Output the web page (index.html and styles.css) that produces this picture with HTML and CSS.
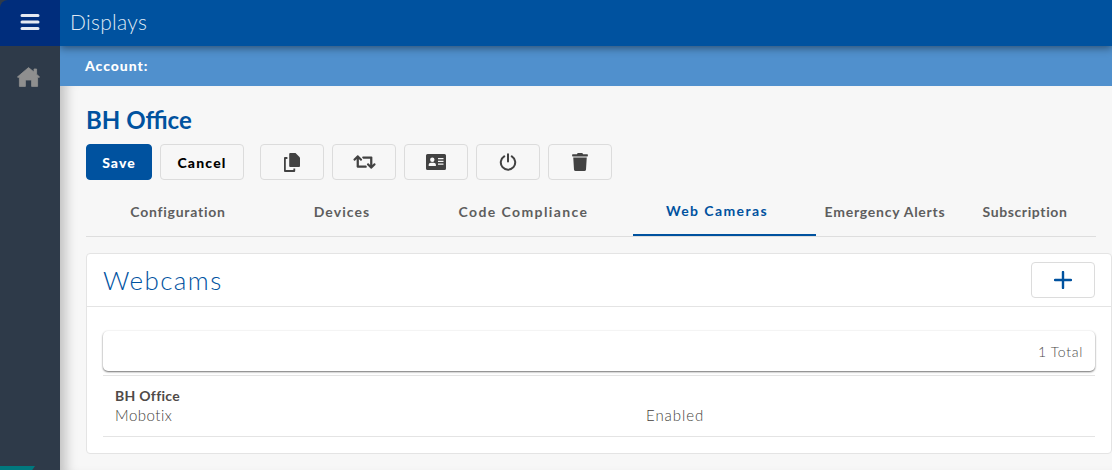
FILE: index.html
```html
<!DOCTYPE html>
<html lang="en">
<head>
<meta charset="utf-8">
<title>Displays</title>
<link rel="stylesheet" href="styles.css">
</head>
<body>
<div class="app">
  <aside class="sidebar">
    <button class="burger" aria-label="Menu">
      <svg width="20" height="18" viewBox="0 0 20 18"><path d="M2 2.500h16M2 9h16M2 15.500h16" stroke="#e4e9f2" stroke-width="3" stroke-linecap="round" fill="none"/></svg>
    </button>
    <div class="side-home">
      <svg width="23" height="20" viewBox="0 0 23 20"><path fill="#8f8f8f" stroke="#8f8f8f" stroke-width=".8" stroke-linejoin="round" d="M11.500.6L17 5V2h2.600v5.200L22.600 10l-2 .6V19.400h-6V13h-6.200v6.400h-6V10.600l-2-.6z"/></svg>
    </div>
    <div class="side-foot"></div>
  </aside>
  <div class="page">
    <header class="topbar"><h1>Displays</h1></header>
    <div class="account">Account:</div>
    <main class="main">
      <h2 class="title">BH Office</h2>
      <div class="actions">
        <button class="btn btn-save">Save</button>
        <button class="btn btn-cancel">Cancel</button>
        <div class="icon-group">
          <button class="btn btn-icon" aria-label="Copy">
            <svg width="16" height="19" viewBox="0 0 16 19"><path fill="#424242" d="M6.200 0h5.300L16 4.500V13a1 1 0 0 1-1 1H6.200a1 1 0 0 1-1-1V1a1 1 0 0 1 1-1z"/><path fill="none" stroke="#424242" stroke-width="1.800" stroke-linejoin="round" d="M3.400 5H.9v13h9.400v-2.600"/></svg>
          </button>
          <button class="btn btn-icon" aria-label="Exchange">
            <svg width="23" height="18" viewBox="0 0 640 512"><path fill="#424242" d="M629.657 343.598L528.971 444.284c-9.373 9.372-24.568 9.372-33.941 0L394.343 343.598c-9.373-9.373-9.373-24.569 0-33.941l10.823-10.823c9.562-9.562 25.133-9.340 34.419.492L480 342.118V160H292.451a24.005 24.005 0 0 1-16.971-7.029l-16-16C244.361 121.851 255.069 96 276.451 96H520c13.255 0 24 10.745 24 24v222.118l40.416-43.792c9.285-9.831 24.856-10.054 34.419-.492l10.823 10.823c9.372 9.372 9.372 24.569-.001 33.941zm-265.138 15.431A23.999 23.999 0 0 0 347.548 352H160V169.881l40.416 43.792c9.286 9.831 24.856 10.054 34.419.491l10.822-10.822c9.373-9.373 9.373-24.569 0-33.941L144.971 67.716c-9.373-9.373-24.569-9.373-33.941 0L10.343 168.402c-9.373 9.373-9.373 24.569 0 33.941l10.822 10.822c9.562 9.562 25.133 9.340 34.419-.491L96 169.881V392c0 13.255 10.745 24 24 24h243.549c21.382 0 32.090-25.851 16.971-40.971l-16.001-16z"/></svg>
          </button>
          <button class="btn btn-icon" aria-label="Card">
            <svg width="20" height="16" viewBox="0 0 20 16"><path fill="#424242" fill-rule="evenodd" d="M1.500 0h17A1.500 1.500 0 0 1 20 1.500v13a1.500 1.500 0 0 1-1.500 1.500h-17A1.500 1.500 0 0 1 0 14.500v-13A1.500 1.500 0 0 1 1.500 0zM6.300 3.500a2.200 2.200 0 1 0 0 4.400 2.200 2.200 0 0 0 0-4.400zM2.700 12h7.200v-1.200c0-1.200-1-2.100-2.200-2.100H4.900c-1.200 0-2.200.9-2.200 2.100zM12 4v1.200h5.500V4zM12 6.800V8h5.500V6.800zM12 9.600v1.200h5.500V9.600z"/></svg>
          </button>
          <button class="btn btn-icon" aria-label="Power">
            <svg width="18" height="18" viewBox="0 0 18 18"><path fill="none" stroke="#424242" stroke-width="2" stroke-linecap="round" d="M9 1.200v7.300M5.200 3.400a7.200 7.200 0 1 0 7.600 0"/></svg>
          </button>
          <button class="btn btn-icon" aria-label="Delete">
            <svg width="16" height="18" viewBox="0 0 448 512"><path fill="#424242" d="M432 32H312l-9.400-18.700A24 24 0 0 0 281.100 0H166.800a23.720 23.720 0 0 0-21.400 13.300L136 32H16A16 16 0 0 0 0 48v32a16 16 0 0 0 16 16h416a16 16 0 0 0 16-16V48a16 16 0 0 0-16-16zM53.200 467a48 48 0 0 0 47.900 45h245.800a48 48 0 0 0 47.900-45L416 128H32z"/></svg>
          </button>
        </div>
      </div>
      <nav class="tabs">
        <a class="tab tab-config">Configuration</a>
        <a class="tab tab-wide">Devices</a>
        <a class="tab tab-widest">Code Compliance</a>
        <a class="tab tab-widest tab-active">Web Cameras</a>
        <a class="tab tab-config">Emergency Alerts</a>
        <a class="tab">Subscription</a>
      </nav>
      <section class="card">
        <div class="card-head">
          <h3>Webcams</h3>
          <button class="btn btn-add" aria-label="Add">
            <svg width="18" height="18" viewBox="0 0 18 18"><path d="M9 1v16M1 9h16" stroke="#00529f" stroke-width="2.400" stroke-linecap="round" fill="none"/></svg>
          </button>
        </div>
        <div class="card-body">
          <div class="total-bar">1 Total</div>
          <div class="row">
            <div class="row-left">
              <div class="row-name">BH Office</div>
              <div class="row-sub">Mobotix</div>
            </div>
            <div class="row-status">Enabled</div>
          </div>
        </div>
      </section>
    </main>
  </div>
</div>
</body>
</html>
```

FILE: styles.css
```css
* { box-sizing: border-box; }
html, body { margin: 0; height: 100%; overflow: hidden; }
body { font-family: "Lato", "Liberation Sans", sans-serif; background: #f7f7f7; }
button { font-family: inherit; cursor: pointer; }
h1, h2, h3 { margin: 0; font-weight: 400; }

.app { display: flex; width: 1112px; height: 470px; }

.sidebar { position: relative; z-index: 3; width: 60px; flex: none; background: #2e3a49; display: flex; flex-direction: column; }
.burger { width: 60px; height: 46px; padding: 0 0 2px; border: 0; background: #002d7c; border-top-left-radius: 8px; display: flex; align-items: center; justify-content: center; }
.side-home { height: 64px; display: flex; align-items: center; justify-content: center; padding: 0 3px 2px 0; }
.side-foot { position: absolute; left: 0; bottom: 0; width: 35px; height: 4px; background: #00787e; clip-path: polygon(0 0, 100% 0, 92% 100%, 0 100%); }

.page { flex: 1; min-width: 0; display: flex; flex-direction: column; }
.topbar { position: relative; z-index: 2; height: 46px; flex: none; background: #00529f; box-shadow: 0 2px 8px rgba(0,0,0,.45); display: flex; align-items: center; padding: 0 0 4px 10px; }
.topbar h1 { font-size: 21px; font-weight: 300; color: #dfe8f3; letter-spacing: .3px; }
.account { height: 40px; flex: none; background: #5090cd; color: #fff; font-size: 14px; font-weight: 900; letter-spacing: .95px; display: flex; align-items: center; padding: 0 0 2px 25px; }

.main { flex: 1; min-height: 0; padding: 20px 0 0 26px; box-shadow: inset 14px 0 12px -8px rgba(0,0,0,.22); }
.title { font-size: 24px; font-weight: 700; color: #00529f; line-height: 28px; letter-spacing: 0; }
.actions { display: flex; gap: 8px; margin-top: 10px; }
.icon-group { display: flex; gap: 8px; margin-left: 8px; }
.btn { height: 36px; border-radius: 4px; border: 1px solid #dcdcdc; background: #f7f7f7; padding: 0; display: flex; align-items: center; justify-content: center; }
.btn-save { width: 66px; background: #00529f; border-color: #00529f; color: #fff; font-size: 14px; font-weight: 900; letter-spacing: 1.1px; }
.btn-cancel { width: 84px; color: #000; font-size: 14px; font-weight: 900; letter-spacing: 1.2px; }
.btn-icon { width: 64px; }

.tabs { display: grid; grid-template-columns: 184px 144px 219px 183px 138px 142px; width: 1010px; margin-top: 10px; height: 47px; border-bottom: 1px solid #dedede; }
.tab { display: flex; align-items: center; justify-content: center; height: 46px; padding-bottom: 4px; font-size: 14px; font-weight: 700; color: #5e5e5e; letter-spacing: .62px; }
.tab-config { letter-spacing: .75px; }
.tab-wide { letter-spacing: 1.1px; }
.tab-widest { letter-spacing: 1.4px; }
.tab-active { color: #00529f; border-bottom: 2px solid #00529f; padding-right: 15px; }

.card { width: 1026px; height: 201px; margin-top: 16px; background: #fff; border: 1px solid #e4e4e4; border-radius: 4px; }
.card-head { height: 53px; padding: 0 16px; display: flex; align-items: center; justify-content: space-between; border-bottom: 1px solid #e4e4e4; }
.card-head h3 { font-size: 26px; font-weight: 300; color: #00529f; letter-spacing: 1.4px; }
.btn-add { width: 64px; background: #fff; }
.card-body { padding: 24px 16px 0; }
.total-bar { height: 40px; background: #fff; border-radius: 5px; box-shadow: 0 1px 2px rgba(0,0,0,.55), 0 0 3px rgba(0,0,0,.05); display: flex; align-items: center; justify-content: flex-end; padding: 0 12px; font-size: 14px; font-weight: 300; color: #4a4a4a; letter-spacing: .7px; }
.row { margin-top: 4px; height: 62px; padding: 10px 12px 0; border-top: 1px solid #e4e4e4; border-bottom: 1px solid #e4e4e4; display: flex; color: #4f4a47; font-size: 14px; line-height: 20px; }
.row-left { width: 531px; }
.row-name { font-weight: 700; letter-spacing: .3px; }
.row-sub, .row-status { font-size: 15px; font-weight: 300; color: #443f3c; }
.row-sub { letter-spacing: .5px; margin-top: -1px; }
.row-status { letter-spacing: .95px; padding-top: 19px; }
```
